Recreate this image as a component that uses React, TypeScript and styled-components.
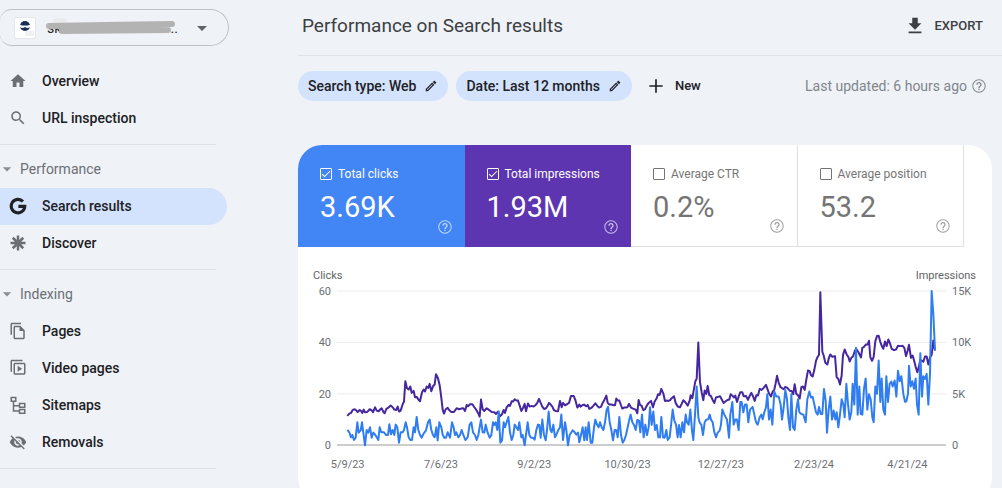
import React from 'react';
import styled, { createGlobalStyle, css } from 'styled-components';

const GlobalStyle = createGlobalStyle`
  *, *::before, *::after { box-sizing: border-box; }
  body {
    margin: 0;
    background: #eff2f7;
    color: #202124;
    font-family: Roboto, 'Liberation Sans', sans-serif;
  }
  button { font: inherit; color: inherit; background: none; border: 0; padding: 0; cursor: pointer; }
  a { color: inherit; text-decoration: none; }
  h1, h2, p, ul { margin: 0; padding: 0; font-weight: 400; list-style: none; }
`;

const Shell = styled.div`
  display: grid;
  grid-template-columns: 298px minmax(0, 1fr);
  height: 100vh;
  overflow: hidden;
`;

/* ---------- icons ---------- */

const Svg = styled.svg<{ $size: number }>`
  display: block;
  flex: none;
  width: ${(p) => p.$size}px;
  height: ${(p) => p.$size}px;
  fill: currentColor;
`;

const paths = {
  home: 'M10 20v-6h4v6h5v-8h3L12 3 2 12h3v8z',
  search:
    'M15.5 14h-.79l-.28-.27C15.41 12.59 16 11.11 16 9.5 16 5.91 13.09 3 9.5 3S3 5.91 3 9.5 5.91 16 9.5 16c1.61 0 3.09-.59 4.23-1.57l.27.28v.79l5 4.99L20.49 19l-4.99-5zm-6 0C7.01 14 5 11.99 5 9.5S7.01 5 9.5 5 14 7.01 14 9.5 11.99 14 9.5 14z',
  pages:
    'M16 1H4c-1.1 0-2 .9-2 2v14h2V3h12V1zm-1 4H8c-1.1 0-1.99.9-1.99 2L6 21c0 1.1.89 2 1.99 2H19c1.1 0 2-.9 2-2V11l-6-6zM8 21V7h6v5h5v9H8z',
  video:
    'M18 1H4c-1.1 0-2 .9-2 2v14h2V3h14V1zM20 5H8c-1.1 0-2 .9-2 2v12c0 1.1.9 2 2 2h12c1.100 0 2-.9 2-2V7c0-1.100-.9-2-2-2zm0 14H8V7h12v12zM11.500 9v8l6-4z',
  sitemap:
    'M2 1h8v7H7v4h6V9h9v7h-9v-2H7v5h6v-2h9v7h-9v-3H5V8H2V1zm2 2v3h4V3H4zm11 8v3h5v-3h-5zm0 8v3h5v-3h-5z',
  removals:
    'M12 7c2.76 0 5 2.24 5 5 0 .65-.13 1.26-.36 1.83l2.92 2.92c1.51-1.26 2.7-2.89 3.43-4.75-1.73-4.39-6-7.5-11-7.5-1.4 0-2.74.25-3.98.7l2.16 2.16C10.74 7.13 11.35 7 12 7zM2 4.27l2.28 2.28.46.46C3.08 8.3 1.78 10.02 1 12c1.73 4.39 6 7.5 11 7.5 1.55 0 3.03-.3 4.38-.84l.42.42L19.73 22 21 20.73 3.27 3 2 4.27zM7.53 9.8l1.55 1.55c-.05.21-.08.43-.08.65 0 1.66 1.34 3 3 3 .22 0 .44-.03.65-.08l1.55 1.55c-.67.33-1.41.53-2.2.53-2.76 0-5-2.24-5-5 0-.79.2-1.53.53-2.2zm4.31-.78l3.15 3.15.02-.16c0-1.66-1.34-3-3-3l-.17.01z',
  edit: 'M14.06 9.02l.92.92L5.92 19H5v-.92l9.06-9.06M17.66 3c-.25 0-.51.1-.7.29l-1.83 1.83 3.75 3.75 1.83-1.83c.39-.39.39-1.02 0-1.41l-2.34-2.34c-.2-.2-.45-.29-.71-.29zm-3.6 3.19L3 17.25V21h3.75L17.81 9.94l-3.75-3.75z',
  plus: 'M20 13h-7v7h-2v-7H4v-2h7V4h2v7h7v2z',
  download: 'M19 9h-4V3H9v6H5l7 7 7-7zM5 18v2h14v-2H5z',
  help: 'M11 18h2v-2h-2v2zm1-16C6.48 2 2 6.48 2 12s4.48 10 10 10 10-4.48 10-10S17.52 2 12 2zm0 18.500c-4.700 0-8.500-3.800-8.500-8.500s3.800-8.500 8.500-8.500 8.500 3.800 8.500 8.500-3.800 8.500-8.500 8.500zm0-14.500c-2.21 0-4 1.79-4 4h2c0-1.1.9-2 2-2s2 .9 2 2c0 2-3 1.75-3 5h2c0-2.25 3-2.5 3-5 0-2.21-1.79-4-4-4z',
  caret: 'M2 8h20l-10 10z',
};

type IconName = keyof typeof paths;

const Icon = ({ name, size }: { name: IconName; size: number }) => (
  <Svg $size={size} viewBox="0 0 24 24" aria-hidden="true">
    <path d={paths[name]} />
  </Svg>
);

const GoogleIcon = () => (
  <Svg $size={18} viewBox="0 0 24 24" aria-hidden="true">
    <path
      d="M18.600 6A9 9 0 1 0 21 12.400H12.500"
      fill="none"
      stroke="currentColor"
      strokeWidth="4.200"
    />
  </Svg>
);

const DiscoverIcon = () => (
  <Svg $size={18} viewBox="0 0 24 24" aria-hidden="true">
    <path
      d="M12 2v20M2 12h20M5 5l14 14M19 5l-14 14"
      stroke="currentColor"
      strokeWidth="3.300"
    />
  </Svg>
);

/* ---------- sidebar ---------- */

const Sidebar = styled.nav`
  width: 229px;
  padding-top: 9px;
`;

const PropertyPicker = styled.button`
  display: flex;
  align-items: center;
  width: 100%;
  height: 37px;
  padding: 0 20px 0 14px;
  border: 1px solid #bfc1c4;
  border-left: 0;
  border-radius: 12px 19px 19px 12px;
  color: #5f6368;
`;

const SiteBadge = styled.span`
  display: grid;
  place-items: center;
  width: 22px;
  height: 22px;
  margin-right: 10px;
  border: 1px solid #e3e5e8;
  border-radius: 2px;
  background: #fff;
`;

const SiteName = styled.span`
  position: relative;
  flex: 1;
  display: flex;
  justify-content: space-between;
  padding: 0 18px 0 1px;
  font-size: 14px;
  line-height: 20px;
  text-align: left;
  color: #202124;
`;

const Scribble = styled.svg`
  position: absolute;
  left: 0;
  top: 0;
  width: 130px;
  height: 18px;
`;

const NavGroup = styled.ul`
  width: 227px;
`;

const TopGroup = styled(NavGroup)`
  margin-top: 17px;
`;

const Divider = styled.hr`
  width: 216px;
  height: 1px;
  margin: 7px 0 6px;
  border: 0;
  background: #dfe1e4;
`;

const navRow = css`
  display: flex;
  align-items: center;
  height: 37px;
  padding-bottom: 2px;
  font-size: 14px;
  line-height: 20px;
`;

const NavLink = styled.a<{ $active?: boolean }>`
  ${navRow}
  gap: 15px;
  padding-left: 9px;
  border-radius: 0 19px 19px 0;
  background: ${(p) => (p.$active ? '#d3e2fd' : 'transparent')};
  font-weight: 500;

  svg { color: ${(p) => (p.$active ? '#202124' : '#6b6f74')}; }
`;

const SectionToggle = styled.button`
  ${navRow}
  gap: 8px;
  width: 100%;
  padding-left: 2px;
  color: #6b6f74;

  svg { color: #8b8e92; }
`;

const NavItem = ({ icon, label, active }: { icon: React.ReactNode; label: string; active?: boolean }) => (
  <li>
    <NavLink href="#" $active={active} aria-current={active ? 'page' : undefined}>
      {icon}
      {label}
    </NavLink>
  </li>
);

/* ---------- header and filters ---------- */

const Main = styled.main`
  min-width: 0;
`;

const Header = styled.header`
  display: flex;
  align-items: center;
  justify-content: space-between;
  height: 56px;
  padding: 0 19px 4px 4px;
  border-bottom: 1px solid #e0e3e4;
`;

const Title = styled.h1`
  font-size: 19px;
  line-height: 28px;
  color: #3c4043;
`;

const ExportButton = styled.button`
  display: flex;
  align-items: center;
  gap: 9px;
  font-size: 13px;
  font-weight: 500;
  line-height: 20px;
  color: #3c4043;
`;

const Filters = styled.div`
  display: flex;
  align-items: center;
  padding: 15px 15px 0 0;
`;

const Chip = styled.button`
  display: flex;
  align-items: center;
  gap: 8px;
  height: 30px;
  margin-right: 8px;
  padding: 0 10px;
  border-radius: 15px;
  background: #d3e2fd;
  font-size: 14px;
  font-weight: 500;
  line-height: 20px;
`;

const NewFilter = styled.button`
  display: flex;
  align-items: center;
  gap: 9px;
  margin-left: 6px;
  font-size: 13px;
  font-weight: 500;
  line-height: 20px;
`;

const Updated = styled.p`
  display: flex;
  align-items: center;
  gap: 4px;
  margin-left: auto;
  font-size: 14px;
  line-height: 20px;
  color: #80868b;
`;

const HelpButton = styled.button`
  display: block;
`;

/* ---------- report card ---------- */

const Card = styled.section`
  margin: 44px 10px 0 0;
  padding-bottom: 28px;
  border-radius: 24px;
  background: #fff;
  overflow: hidden;
`;

const Tiles = styled.div`
  display: grid;
  grid-template-columns: repeat(4, minmax(0, 1fr));
  margin-right: 28px;
`;

const Tile = styled.div<{ $fill?: string }>`
  position: relative;
  height: 102px;
  padding: 20px 0 0 22px;
  background: ${(p) => p.$fill ?? '#fff'};
  color: ${(p) => (p.$fill ? '#fff' : '#757575')};
  border: 0 solid #e0e0e0;
  border-width: ${(p) => (p.$fill ? '0' : '0 1px 1px 0')};

  ${HelpButton} {
    position: absolute;
    right: 12px;
    bottom: 12px;
    opacity: 0.7;
  }
`;

const TileLabel = styled.label`
  display: flex;
  align-items: center;
  gap: 6px;
  font-size: 12px;
  line-height: 18px;
`;

const Check = styled.input`
  appearance: none;
  width: 12px;
  height: 12px;
  margin: 0;
  border: 1px solid currentColor;
  border-radius: 1px;
  color: inherit;

  &:checked::after {
    content: '';
    display: block;
    width: 8px;
    height: 4px;
    margin: 2px 0 0 1px;
    border: solid currentColor;
    border-width: 0 0 1px 1px;
    transform: rotate(-45deg);
  }
`;

const TileValue = styled.p`
  margin-top: 6px;
  font-size: 29px;
  line-height: 36px;
`;

const AxisTitles = styled.div`
  display: flex;
  justify-content: space-between;
  padding: 21px 16px 0 15px;
  font-size: 11px;
  line-height: 16px;
  color: #5f6368;
`;

const ChartRow = styled.div`
  display: grid;
  grid-template-columns: 39px minmax(0, 1fr) 46px;
  height: 154px;
  margin-top: 7px;
`;

const Scale = styled.div<{ $side: 'left' | 'right' }>`
  display: flex;
  flex-direction: column;
  justify-content: space-between;
  margin: -7px 0 -9px;
  padding: ${(p) => (p.$side === 'left' ? '0 6px 0 0' : '0 0 0 6px')};
  text-align: ${(p) => (p.$side === 'left' ? 'right' : 'left')};
  font-size: 11px;
  line-height: 16px;
  color: #6b6f74;
`;

const Plot = styled.svg`
  display: block;
  width: 100%;
  height: 100%;
  overflow: visible;

  line { stroke: #ebebeb; stroke-width: 1px; vector-effect: non-scaling-stroke; }
  line:last-of-type { stroke: #9a9a9a; }
  polyline { fill: none; stroke-width: 2px; stroke-linejoin: round; vector-effect: non-scaling-stroke; }
`;

const Dates = styled.div`
  display: grid;
  grid-template-columns: repeat(7, minmax(0, 1fr));
  margin: 12px 38px 0 3px;
  text-align: center;
  font-size: 11px;
  line-height: 16px;
  color: #6b6f74;
`;

/* Each segment covers part of the year: a start offset and its "x,y" samples. */
type Segment = [number, string];

const impressions: Segment[] = [
  [-111, '142,466 148,459 153,457 158,448 164,446 169,450 173,454 179,448 184,452 187,457 191,447 195,455 202,454 209,446 215,449 219,455 225,440 230,450 236,452 241,446 245,443 250,454 254,458 259,445 264,442 272,435 278,440 283,447 289,448 293,438 297,453 302,450 308,431 312,423 316,362 321,383 326,387 331,378 335,397 341,391 345,410 350,409 356,418 360,422 366,395 371,387 375,393 380,378 385,382 389,370 394,392 399,377 404,372 408,341 414,353 419,374 424,412 428,447 432,459 437,446 443,442 448,449 454,454 462,454 470,443 478,446 483,444 490,443 495,451 500,433 504,437 510,431 517,431 523,440 529,448 534,457 539,468 543,417 548,446 553,451 560,443 567,448 575,454 583,455 588,460 594,453'],
  [489, '0,467 6,461 11,448 15,457 20,440 26,433 30,436 35,422 39,423 44,416 49,420 54,420 59,435 64,451 69,442 74,430 78,452 84,429 89,438 95,436 101,438 107,433 112,427 117,415 122,427 127,438 132,445 137,444 142,437 147,427 152,432 157,438 162,449 167,451 174,452 180,421 185,440 189,427 195,434 201,431 207,427 213,406 221,406 226,418 232,441 238,432 242,438 247,434 252,432 258,437 263,433 268,445 274,442 280,436 286,428 292,436 297,441 303,439 308,427 313,418 319,405 323,427 328,432 334,432 341,434 345,434 349,414 353,420 358,420 363,434 367,444 372,441 377,441 382,440 387,430 393,441 399,444 407,447 412,458 416,418 420,433 425,436 430,449 435,446 440,436 446,427 453,421 459,440 464,423 470,413 474,401 479,403 484,385 490,399 495,421 500,420 505,421 510,419 515,413 522,407 527,427 533,438'],
  [969, '60,440 65,430 70,419 76,425 83,435 89,420 92,404 97,413 101,390 106,362 110,355 115,246 120,365 125,395 130,419 134,390 139,400 143,376 148,404 153,407 158,418 163,427 168,411 174,409 180,407 185,416 191,427 197,422 203,418 208,417 212,401 218,406 222,411 226,405 231,424 237,405 241,395 247,395 251,407 258,406 264,418 269,406 274,397 279,407 284,421 289,404 294,405 299,385 305,388 311,382 318,373 323,387 327,399 333,408 338,393 343,387 347,368 351,346 356,366 361,379 365,382 371,386 376,379 382,382 390,391 395,391 400,401 404,371 409,400 414,404 419,414 424,380 429,378 434,388 439,357 444,330 449,332 453,344 458,348 463,328 468,301 472,291 477,283 481,96 487,274 491,285 496,307 502,312 507,291 511,282 517,289 525,287 530,350 535,355'],
  [1449, '60,372 65,345 69,284 74,267 80,282 85,289 89,303 94,292 99,288 105,270 109,266 114,273 119,283 123,291 127,262 132,259 138,252 143,252 147,241 151,290 156,301 161,289 166,242 171,227 176,226 181,245 186,258 190,265 195,243 200,257 205,237 210,249 215,265 222,269 228,267 234,256 240,257 248,256 253,262 258,287 263,270 267,253 273,292 278,285 283,303 287,319 292,335 296,322 301,298 306,301 310,304 315,288 320,288 325,312 330,291 335,283 340,240 345,270'],
];

const clicks: Segment[] = [
  [-111, '142,508 148,515 153,530 157,523 162,538 167,531 172,485 176,516 182,509 186,485 190,517 195,554 200,508 205,516 210,500 215,531 220,516 226,523 235,538 239,500 244,515 252,515 258,523 264,523 268,491 273,521 278,508 283,523 287,492 292,500 297,546 302,515 308,515 312,508 317,485 321,500 326,530 331,538 336,538 341,500 345,515 350,469 355,508 360,523 365,531 370,520 378,509 384,485 389,477 394,508 399,523 404,530 409,500 413,539 418,485 424,500 428,522 433,531 438,531 443,515 450,531 456,485 461,500 465,523 469,515 475,530 480,523 485,508 490,523 496,538 503,530 509,492 514,485 519,515 525,523 530,538 535,523 539,500 543,477 548,515 553,516 557,492 563,516 569,531 574,523 579,485 583,493 587,485 592,508 596,453 601,546 606,540 611,485 615,500 625,469 630,515 635,538 640,523 644,492 649,500 654,508 658,485'],
  [489, '64,530 68,523 74,554 78,523 83,485 88,523 93,531 99,531 104,537 109,508 114,492 118,493 122,531 127,477 132,523 137,539 141,508 146,453 151,507 155,515 160,492 165,530 170,520 175,508 180,500 184,462 189,538 195,485 199,508 204,554 209,523 218,509 224,515 229,522 234,516 238,545 243,523 248,500 253,539 257,500 261,538 266,485 272,546 277,546 282,500 286,477 291,492 296,500 300,485 305,500 310,508 315,485 320,447 324,439 329,484 334,508 339,539 344,508 349,509 353,530 358,469 363,523 368,546 373,538 378,523 383,500 388,477 392,462 397,485 402,493 407,508 412,478 417,480 421,515 426,462 431,530 436,492 441,523 446,500 450,440 455,493 460,453 465,508 470,493 475,530 480,530 484,469 489,530 494,531 499,508 503,538 509,530 514,485'],
  [969, '38,447 43,480 48,492 53,530 57,493 62,530 67,485 72,515 77,462 81,485 86,492 91,447 96,510 100,538 105,462 110,378 115,470 119,486 124,492 129,523 134,485 139,477 145,476 149,462 153,477 158,485 163,515 168,530 173,516 179,510 183,492 187,447 193,462 201,477 207,531 211,462 217,424 221,492 226,477 231,477 236,508 241,424 245,424 250,455 255,432 260,432 265,485 270,447 278,439 283,462 288,485 293,492 299,470 304,462 308,476 313,455 318,440 322,401 327,477 332,447 337,492 343,393 349,408 356,408 362,432 366,477 371,440 376,388 381,416 385,470 390,508 394,401 399,500 404,508 409,447 414,416 418,455 424,460 430,462 437,485 442,416 448,393 453,411 458,409 463,432 468,455 473,462 477,439 482,460 487,460 492,385 497,420 501,516 506,447 511,408 516,477 521,450 526,477 530,455'],
  [1449, '55,500 60,462 65,416 70,432 74,470 79,370 84,430 89,477 94,455 98,370 103,432 108,262 113,462 118,378 122,460 127,462 132,385 137,354 142,447 147,401 152,416 157,470 161,485 166,378 171,400 176,300 181,424 185,354 190,447 195,462 199,347 204,424 209,370 214,363 218,378 224,360 229,408 234,331 239,362 244,347 250,400 255,424 259,422 264,400 267,316 272,378 277,362 282,385 287,354 291,432 296,462 301,278 306,408 310,347 315,355 320,340 325,432 330,340 335,92 340,160 345,270'],
];

const toPoints = (segments: Segment[]) =>
  segments
    .flatMap(([offset, samples]) =>
      samples.split(' ').map((sample) => {
        const [x, y] = sample.split(',').map(Number);
        return `${x + offset},${y}`;
      }),
    )
    .join(' ');

const metrics = [
  { label: 'Total clicks', value: '3.69K', fill: '#4285f4' },
  { label: 'Total impressions', value: '1.93M', fill: '#5e35b1' },
  { label: 'Average CTR', value: '0.2%' },
  { label: 'Average position', value: '53.2' },
];

const dates = ['5/9/23', '7/6/23', '9/2/23', '10/30/23', '12/27/23', '2/23/24', '4/21/24'];

export default function App() {
  return (
    <>
      <GlobalStyle />
      <Shell>
        <Sidebar aria-label="Search Console">
          <PropertyPicker aria-label="Select property">
            <SiteBadge>
              <Svg $size={18} viewBox="0 0 18 18" aria-hidden="true">
                <circle cx="9" cy="7" r="5" fill="#1d2f4f" />
                <path d="M4 6h10v2q-2 2-5 0-3 2-5 0z" fill="#fff" />
                <path d="M5 6h8l-1 1H6z" fill="#6f93b8" />
                <rect x="9" y="12" width="9" height="5" rx="2" fill="#eff0f2" />
              </Svg>
            </SiteBadge>
            <SiteName>
              <span>sk</span>
              <span>..</span>
              <Scribble viewBox="0 0 130 18" aria-hidden="true">
                <path d="M9 3h10" stroke="#e9eaec" strokeWidth="5" strokeLinecap="round" />
                <path d="M3 8l55-1 68-1M16 13l106-1" stroke="#b3b3b3" strokeWidth="6" strokeLinecap="round" fill="none" />
              </Scribble>
            </SiteName>
            <Icon name="caret" size={12} />
          </PropertyPicker>

          <TopGroup>
            <NavItem icon={<Icon name="home" size={18} />} label="Overview" />
            <NavItem icon={<Icon name="search" size={18} />} label="URL inspection" />
          </TopGroup>
          <Divider />
          <SectionToggle aria-expanded="true">
            <Icon name="caret" size={10} />
            Performance
          </SectionToggle>
          <NavGroup>
            <NavItem icon={<GoogleIcon />} label="Search results" active />
            <NavItem icon={<DiscoverIcon />} label="Discover" />
          </NavGroup>
          <Divider />
          <SectionToggle aria-expanded="true">
            <Icon name="caret" size={10} />
            Indexing
          </SectionToggle>
          <NavGroup>
            <NavItem icon={<Icon name="pages" size={18} />} label="Pages" />
            <NavItem icon={<Icon name="video" size={18} />} label="Video pages" />
            <NavItem icon={<Icon name="sitemap" size={18} />} label="Sitemaps" />
            <NavItem icon={<Icon name="removals" size={18} />} label="Removals" />
          </NavGroup>
          <Divider />
        </Sidebar>

        <Main>
          <Header>
            <Title>Performance on Search results</Title>
            <ExportButton>
              <Icon name="download" size={22} />
              EXPORT
            </ExportButton>
          </Header>

          <Filters>
            <Chip>
              Search type: Web
              <Icon name="edit" size={14} />
            </Chip>
            <Chip>
              Date: Last 12 months
              <Icon name="edit" size={14} />
            </Chip>
            <NewFilter>
              <Icon name="plus" size={20} />
              New
            </NewFilter>
            <Updated>
              Last updated: 6 hours ago
              <HelpButton aria-label="About data freshness">
                <Icon name="help" size={16} />
              </HelpButton>
            </Updated>
          </Filters>

          <Card>
            <Tiles>
              {metrics.map(({ label, value, fill }) => (
                <Tile key={label} $fill={fill}>
                  <TileLabel>
                    <Check type="checkbox" defaultChecked={Boolean(fill)} />
                    {label}
                  </TileLabel>
                  <TileValue>{value}</TileValue>
                  <HelpButton aria-label={`About ${label}`}>
                    <Icon name="help" size={16} />
                  </HelpButton>
                </Tile>
              ))}
            </Tiles>
            <AxisTitles>
              <span>Clicks</span>
              <span>Impressions</span>
            </AxisTitles>
            <ChartRow>
              <Scale $side="left">
                <span>60</span>
                <span>40</span>
                <span>20</span>
                <span>0</span>
              </Scale>
              <Plot viewBox="0 92 1827 461" preserveAspectRatio="none" role="img" aria-label="Clicks and impressions per day">
                {[92, 246, 400, 553].map((y) => (
                  <line key={y} x1="0" x2="1827" y1={y} y2={y} />
                ))}
                <polyline points={toPoints(impressions)} stroke="#4527a0" />
                <polyline points={toPoints(clicks)} stroke="#2f7df0" />
              </Plot>
              <Scale $side="right">
                <span>15K</span>
                <span>10K</span>
                <span>5K</span>
                <span>0</span>
              </Scale>
            </ChartRow>
            <Dates>
              {dates.map((date) => (
                <span key={date}>{date}</span>
              ))}
            </Dates>
          </Card>
        </Main>
      </Shell>
    </>
  );
}
